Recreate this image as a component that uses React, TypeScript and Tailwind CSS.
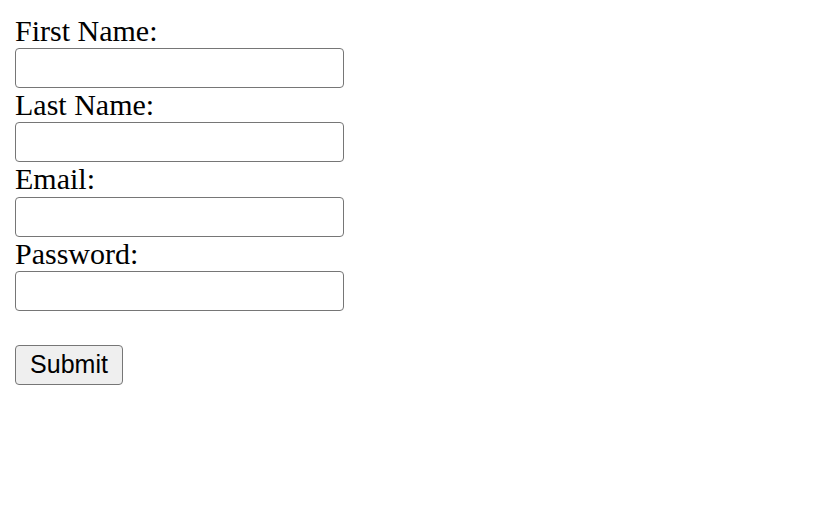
import React from 'react';

const fields = [
  { label: 'First Name:', type: 'text' },
  { label: 'Last Name:', type: 'text' },
  { label: 'Email:', type: 'email' },
  { label: 'Password:', type: 'password' },
];

export default function App() {
  return (
    <div className="min-h-screen bg-white pt-[14px] px-[15px] text-black font-['Liberation_Serif',serif] text-[30px] leading-[34.2px]">
      <form className="flex flex-col items-start" onSubmit={(e) => e.preventDefault()}>
        {fields.map((f) => (
          <label key={f.label} className="flex flex-col items-start">
            <span className="block h-[34.2px]">{f.label}</span>
            <input
              type={f.type}
              className="box-border w-[329px] h-[40px] border border-[#767676] rounded-[4px] bg-white px-[4px] outline-none"
            />
          </label>
        ))}
        <div className="h-[34.2px]" />
        <button
          type="submit"
          className="box-border w-[108px] h-[40px] border border-[#767676] rounded-[4px] bg-[#efefef] font-['Liberation_Sans',Arial,sans-serif] text-[25px] leading-none text-black flex items-center justify-center"
        >
          Submit
        </button>
      </form>
    </div>
  );
}
